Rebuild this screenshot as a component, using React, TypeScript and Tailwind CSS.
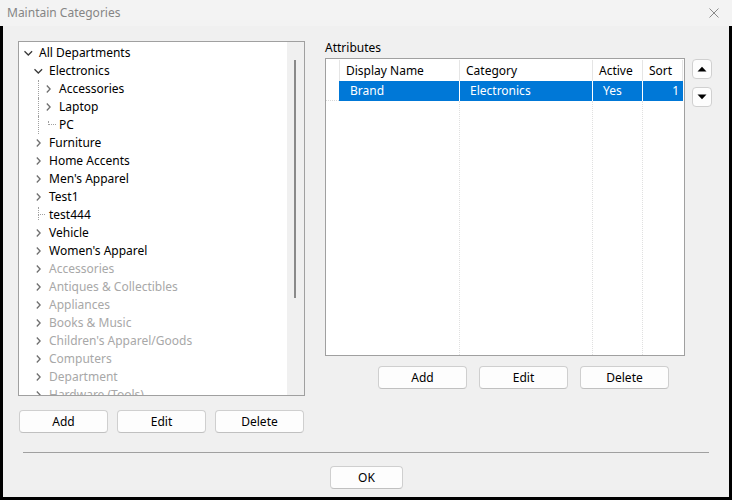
import React from "react";

type TreeItem = {
  label: string;
  level: 0 | 1 | 2;
  kind: "open" | "closed" | "leaf";
  line?: boolean;
  dim?: boolean;
};

const treeItems: TreeItem[] = [
  { label: "All Departments", level: 0, kind: "open" },
  { label: "Electronics", level: 1, kind: "open" },
  { label: "Accessories", level: 2, kind: "closed", line: true },
  { label: "Laptop", level: 2, kind: "closed", line: true },
  { label: "PC", level: 2, kind: "leaf", line: true },
  { label: "Furniture", level: 1, kind: "closed" },
  { label: "Home Accents", level: 1, kind: "closed" },
  { label: "Men's Apparel", level: 1, kind: "closed" },
  { label: "Test1", level: 1, kind: "closed" },
  { label: "test444", level: 1, kind: "leaf" },
  { label: "Vehicle", level: 1, kind: "closed" },
  { label: "Women's Apparel", level: 1, kind: "closed" },
  { label: "Accessories", level: 1, kind: "closed", dim: true },
  { label: "Antiques & Collectibles", level: 1, kind: "closed", dim: true },
  { label: "Appliances", level: 1, kind: "closed", dim: true },
  { label: "Books & Music", level: 1, kind: "closed", dim: true },
  { label: "Children's Apparel/Goods", level: 1, kind: "closed", dim: true },
  { label: "Computers", level: 1, kind: "closed", dim: true },
  { label: "Department", level: 1, kind: "closed", dim: true },
  { label: "Hardware (Tools)", level: 1, kind: "closed", dim: true },
];

function ChevronRight() {
  return (
    <svg width="10" height="10" viewBox="0 0 10 10" className="block">
      <path d="M3.8 1.5 L7.1 5 L3.8 8.5" fill="none" stroke="#6f6f6f" strokeWidth="1.3" />
    </svg>
  );
}

function ChevronDown() {
  return (
    <svg width="10" height="10" viewBox="0 0 10 10" className="block">
      <path d="M1.5 3.3 L5.3 7 L9.1 3.3" fill="none" stroke="#3a3a3a" strokeWidth="1.3" />
    </svg>
  );
}

function GutterLine() {
  return (
    <div className="h-full w-[10px] pl-[5px]">
      <div className="h-full border-l border-dotted border-[#a0a0a0]" />
    </div>
  );
}

function TreeRow({ item }: { item: TreeItem }) {
  return (
    <div className="flex h-[18px] items-center pl-[4px] whitespace-nowrap">
      {item.level >= 1 && <div className="h-full w-[10px]" />}
      {item.level === 2 && (item.line ? <GutterLine /> : <div className="h-full w-[10px]" />)}
      <div className="flex h-full w-[10px] items-center justify-center">
        {item.kind === "open" && <ChevronDown />}
        {item.kind === "closed" && <ChevronRight />}
        {item.kind === "leaf" && (
          <div className="flex h-full w-full flex-col pl-[5px]">
            <div className={item.level === 2 ? "h-[5px]" : "h-[1px]"} />
            <div
              className={
                item.level === 2
                  ? "h-[4px] w-[8px] border-b border-l border-dotted border-[#a0a0a0]"
                  : "h-[8px] w-[7px] border-b border-l border-dotted border-[#a0a0a0]"
              }
            />
            {item.level === 1 && <div className="h-[5px] border-l border-dotted border-[#a0a0a0]" />}
          </div>
        )}
      </div>
      <span className={"ml-[6px] leading-[18px] " + (item.dim ? "text-[#a8a8a8]" : "text-black")}>
        {item.label}
      </span>
    </div>
  );
}

function Btn({ label, className }: { label: string; className: string }) {
  return (
    <button
      className={
        "flex items-center justify-center rounded-[4px] border border-[#cfcfcf] border-b-[#c0c0c0] bg-[#fdfdfd] text-[12px] text-black " +
        className
      }
    >
      {label}
    </button>
  );
}

function Triangle({ up }: { up: boolean }) {
  return (
    <svg width="10" height="6" viewBox="0 0 10 6" className="block">
      <path d={up ? "M0.5 5.5 L5 0.8 L9.5 5.5 Z" : "M0.5 0.5 L5 5.2 L9.5 0.5 Z"} fill="#000" />
    </svg>
  );
}

export default function App() {
  return (
    <div
      className="flex h-[500px] w-[732px] flex-col bg-black text-[12px]"
      style={{ fontFamily: '"Noto Sans", "Open Sans", sans-serif' }}
    >
      {/* title bar */}
      <div className="flex h-[26px] items-center justify-between bg-[#f3f3f3] pl-[7px] pr-[13px]">
        <span className="text-[12px] text-[#858585]">Maintain Categories</span>
        <svg width="10" height="10" viewBox="0 0 10 10" className="block">
          <path d="M0.5 0.5 L9.5 9.5 M9.5 0.5 L0.5 9.5" stroke="#8a8a8a" strokeWidth="1" />
        </svg>
      </div>

      <div className="mx-[3px] mb-[3px] flex flex-1 flex-col bg-[#f0f0f0]">
        <div className="flex items-start pl-[15px] pt-[15px]">
          {/* categories tree */}
          <div className="w-[287px]">
            <div className="flex h-[355px] border border-[#a0a0a0] bg-white">
              <div className="flex-1 overflow-hidden pt-[2px]">
                {treeItems.map((item, i) => (
                  <TreeRow key={i} item={item} />
                ))}
              </div>
              <div className="w-[17px] bg-[#f0f0f0] pl-[7px] pt-[18px]">
                <div className="h-[238px] w-[2px] bg-[#8a8a8a]" />
              </div>
            </div>
            <div className="mt-[14px] flex w-[286px] justify-between pl-[1px]">
              <Btn label="Add" className="h-[23px] w-[89px]" />
              <Btn label="Edit" className="h-[23px] w-[89px]" />
              <Btn label="Delete" className="h-[23px] w-[89px]" />
            </div>
          </div>

          {/* attributes */}
          <div className="ml-[20px]">
            <div className="h-[17px] leading-[13px] text-black">Attributes</div>
            <div className="flex">
              <div className="flex h-[298px] w-[360px] flex-col border border-[#a0a0a0] bg-white">
                <div className="flex h-[22px] items-center pt-[1px] leading-[21px] text-black">
                  <div className="h-full w-[13px]" />
                  <div className="h-full w-[120px] border-l border-[#e5e5e5] pl-[6px]">Display Name</div>
                  <div className="h-full w-[133px] border-l border-[#e5e5e5] pl-[6px]">Category</div>
                  <div className="h-full w-[50px] border-l border-[#e5e5e5] pl-[6px]">Active</div>
                  <div className="h-full w-[41px] border-x border-[#e5e5e5] pl-[6px]">Sort</div>
                </div>
                <div className="flex h-[20px] leading-[20px] text-white">
                  <div className="h-full w-[13px] border-b border-dotted border-[#d8d8d8]" />
                  <div className="h-full w-[120px] bg-[#0078d7] pl-[11px]">Brand</div>
                  <div className="h-full w-[133px] border-l border-white bg-[#0078d7] pl-[10px]">Electronics</div>
                  <div className="h-full w-[50px] border-l border-white bg-[#0078d7] pl-[10px]">Yes</div>
                  <div className="h-full w-[41px] border-l border-white bg-[#0078d7] pr-[4px] text-right">1</div>
                </div>
                <div className="flex flex-1">
                  <div className="w-[13px]" />
                  <div className="w-[120px]" />
                  <div className="w-[133px] border-l border-dotted border-[#e0e0e0]" />
                  <div className="w-[50px] border-l border-dotted border-[#e0e0e0]" />
                  <div className="w-[41px] border-l border-dotted border-[#e0e0e0]" />
                </div>
              </div>
              <div className="ml-[7px] mt-[1px] flex flex-col gap-[8px]">
                <button className="flex h-[20px] w-[20px] items-center justify-center rounded-[4px] border border-[#d0d0d0] bg-[#fdfdfd]">
                  <Triangle up />
                </button>
                <button className="flex h-[20px] w-[20px] items-center justify-center rounded-[4px] border border-[#d0d0d0] bg-[#fdfdfd]">
                  <Triangle up={false} />
                </button>
              </div>
            </div>
            <div className="ml-[53px] mt-[10px] flex gap-[12px]">
              <Btn label="Add" className="h-[23px] w-[89px]" />
              <Btn label="Edit" className="h-[23px] w-[89px]" />
              <Btn label="Delete" className="h-[23px] w-[89px]" />
            </div>
          </div>
        </div>

        <div className="ml-[20px] mt-[19px] h-px w-[686px] bg-[#a0a0a0]" />
        <Btn label="OK" className="ml-[327px] mt-[13px] h-[23px] w-[73px]" />
      </div>
    </div>
  );
}
